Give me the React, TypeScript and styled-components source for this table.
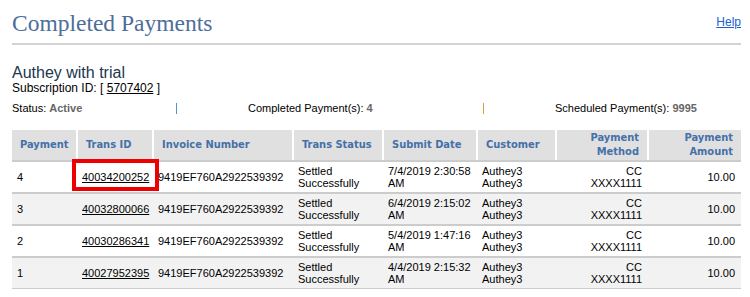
import React from "react";
import styled, { createGlobalStyle } from "styled-components";

const Global = createGlobalStyle`
  html, body { margin: 0; padding: 0; background: #fff; }
  body { font-family: "Liberation Sans", Arial, sans-serif; color: #000; }
`;

const Page = styled.div`
  width: 729px;
  padding: 0 0 0 12px;
`;

const TopBar = styled.div`
  display: flex;
  justify-content: space-between;
  align-items: flex-start;
  height: 35px;
  padding-top: 8px;
  border-bottom: 2px solid #d3d3d3;
`;

const Title = styled.h1`
  margin: 0;
  font-family: "Liberation Serif", Georgia, serif;
  font-weight: normal;
  font-size: 23.5px;
  line-height: 30px;
  color: #4d6d9a;
`;

const HelpLink = styled.a`
  margin-top: 7px;
  font-size: 12px;
  line-height: 14px;
  color: #1a5fd0;
  text-decoration: underline;
`;

const SubBlock = styled.div`
  padding-top: 20px;
`;

const SubName = styled.div`
  font-size: 16px;
  line-height: 16px;
  color: #203550;
`;

const SubId = styled.div`
  font-size: 12px;
  line-height: 14px;
  color: #000;
  a { color: #000; text-decoration: underline; }
`;

const StatusRow = styled.div`
  display: grid;
  grid-template-columns: 164px 307px 1fr;
  align-items: center;
  margin-top: 7px;
  font-size: 11px;
  line-height: 13px;
`;

const StatusCell = styled.div<{ $sep?: string }>`
  position: relative;
  padding-left: ${(p) => (p.$sep ? "72px" : "0")};
  &::before {
    content: "";
    display: ${(p) => (p.$sep ? "block" : "none")};
    position: absolute;
    left: 0;
    top: 1px;
    width: 1px;
    height: 11px;
    background: ${(p) => p.$sep || "transparent"};
  }
`;

const Val = styled.b`
  color: #666;
`;

const Table = styled.table`
  margin-top: 15px;
  width: 729px;
  table-layout: fixed;
  border-collapse: collapse;
  font-size: 11px;
  line-height: 12px;
`;

const Th = styled.th<{ $right?: boolean }>`
  height: 30px;
  padding: 0 8px;
  background: #e0e0e0;
  color: #4570a8;
  font-family: "DejaVu Sans Condensed", "DejaVu Sans", sans-serif;
  font-stretch: condensed;
  font-size: 11px;
  font-weight: bold;
  line-height: 14px;
  text-align: ${(p) => (p.$right ? "right" : "left")};
  border-left: 2px solid #fff;
  border-bottom: 2px solid #cccccc;
  &:first-child { border-left: none; }
`;

const Tr = styled.tr<{ $alt?: boolean }>`
  background: ${(p) => (p.$alt ? "#f2f2f2" : "#fff")};
  &:last-child td { border-bottom-width: 1px; }
`;

const Td = styled.td<{ $right?: boolean }>`
  height: 24px;
  padding: 3px 6px 3px 5px;
  text-align: ${(p) => (p.$right ? "right" : "left")};
  vertical-align: middle;
  white-space: nowrap;
  border-bottom: 2px solid #cccccc;
  position: relative;
  a { color: #000; text-decoration: underline; }
`;

const Highlight = styled.span`
  position: absolute;
  left: -5px;
  right: -6px;
  top: -3px;
  bottom: 1px;
  border: 4px solid #ee0000;
  pointer-events: none;
`;

const rows = [
  { n: "4", id: "40034200252", date: "7/4/2019 2:30:58", hl: true },
  { n: "3", id: "40032800066", date: "6/4/2019 2:15:02" },
  { n: "2", id: "40030286341", date: "5/4/2019 1:47:16" },
  { n: "1", id: "40027952395", date: "4/4/2019 2:15:32" },
];

const widths = [65, 76, 140, 90, 94, 79, 92, 93];

export default function App() {
  return (
    <>
      <Global />
      <Page>
        <TopBar>
          <Title>Completed Payments</Title>
          <HelpLink href="#">Help</HelpLink>
        </TopBar>
        <SubBlock>
          <SubName>Authey with trial</SubName>
          <SubId>
            Subscription ID: [ <a href="#">5707402</a> ]
          </SubId>
          <StatusRow>
            <StatusCell>
              Status: <Val>Active</Val>
            </StatusCell>
            <StatusCell $sep="#4f94d6">
              Completed Payment(s): <Val>4</Val>
            </StatusCell>
            <StatusCell $sep="#e09a3c">
              Scheduled Payment(s): <Val>9995</Val>
            </StatusCell>
          </StatusRow>
        </SubBlock>
        <Table>
          <colgroup>
            {widths.map((w, i) => (
              <col key={i} style={{ width: w }} />
            ))}
          </colgroup>
          <thead>
            <tr>
              <Th>Payment</Th>
              <Th>Trans ID</Th>
              <Th>Invoice Number</Th>
              <Th>Trans Status</Th>
              <Th>Submit Date</Th>
              <Th>Customer</Th>
              <Th $right>
                Payment
                <br />
                Method
              </Th>
              <Th $right>
                Payment
                <br />
                Amount
              </Th>
            </tr>
          </thead>
          <tbody>
            {rows.map((r, i) => (
              <Tr key={r.id} $alt={i % 2 === 1}>
                <Td>{r.n}</Td>
                <Td>
                  <a href="#">{r.id}</a>
                  {r.hl && <Highlight />}
                </Td>
                <Td>9419EF760A2922539392</Td>
                <Td>
                  Settled
                  <br />
                  Successfully
                </Td>
                <Td>
                  {r.date}
                  <br />
                  AM
                </Td>
                <Td>
                  Authey3
                  <br />
                  Authey3
                </Td>
                <Td $right>
                  CC
                  <br />
                  XXXX1111
                </Td>
                <Td $right>10.00</Td>
              </Tr>
            ))}
          </tbody>
        </Table>
      </Page>
    </>
  );
}
